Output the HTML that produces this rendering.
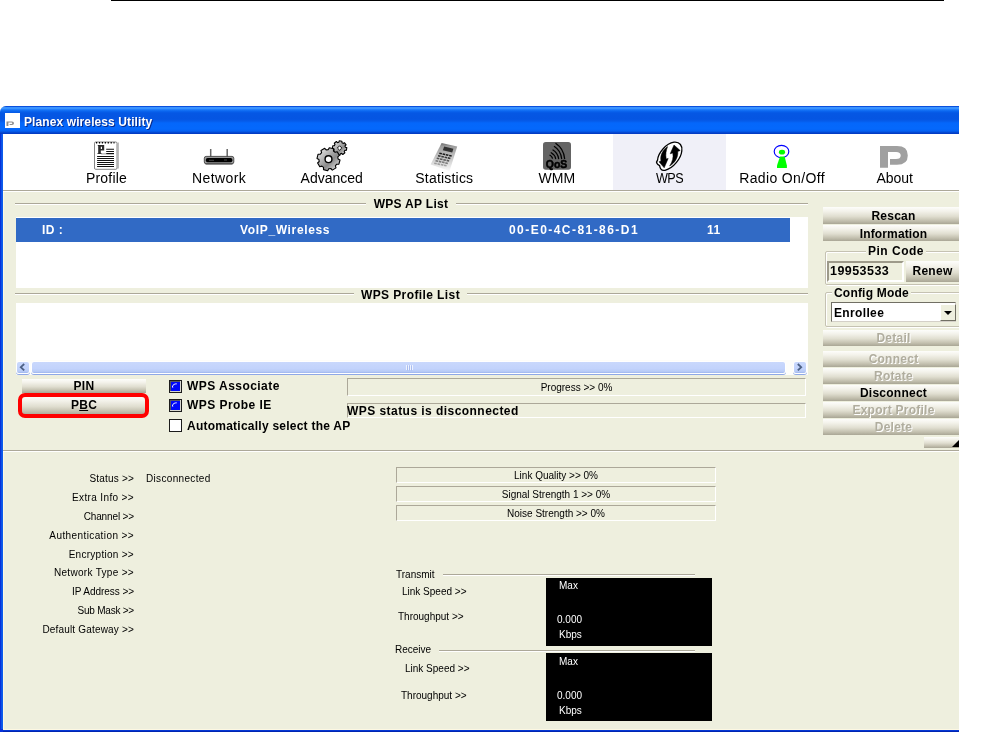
<!DOCTYPE html>
<html><head><meta charset="utf-8">
<style>
*{box-sizing:border-box;margin:0;padding:0}
html,body{width:998px;height:732px;overflow:hidden;background:#fff}
body{font-family:"Liberation Sans",sans-serif;position:relative;color:#000}
.abs{position:absolute}
#topline{left:111px;top:0;width:833px;height:1px;background:#000}
#win{will-change:transform;left:0;top:106px;width:959px;height:626px;background:#eeefde;overflow:hidden;border-top-left-radius:6px}
#title{left:0;top:0;width:959px;height:28px;background:linear-gradient(to bottom,#0a50dd 0px,#0a50dd 1px,#3a93ff 1.5px,#3a93ff 3px,#1f7dfb 3.5px,#0b67f0 5px,#0557e4 7px,#0555e2 13px,#055bea 15px,#0467fb 17px,#0468fc 23px,#0561f2 25px,#0450dc 26px,#0340c8 27px,#0338c0 28px)}
#title .ico{left:5px;top:7px;width:15px;height:15px;background:#fff}
#title .txt{left:24px;top:9px;letter-spacing:.1px;font-size:12px;font-weight:bold;color:#fff;white-space:nowrap;text-shadow:1px 1px 0 #0a2a8a}
#lb{left:0;top:28px;width:4px;height:598px;background:linear-gradient(to right,#0831d9 0,#0831d9 1px,#0b52e6 1px,#0b52e6 2px,#0d5cec 2px,#0d5cec 3px,#fdf8e2 3px)}
#bb{left:0;top:623px;width:959px;height:3px;background:linear-gradient(to bottom,#fdf8e2 0,#fdf8e2 1px,#0a3fe0 1px,#0030c8 2px,#001a9c 3px);border-left:3px solid #0831d9}
#tool{left:3px;top:28px;width:956px;height:57px;background:#fff;border-bottom:1px solid #aca899;box-shadow:0 1px 0 #fff}
.tab{top:0;width:113px;height:56px;text-align:center;font-size:14px}
.tab span{position:absolute;left:0;width:100%;top:36px;line-height:16px}
.tab.sel{background:#f0f0f8}

.gl{height:2px;border-top:1px solid #aca899;border-bottom:1px solid #fff}
.gt{font-size:12px;font-weight:bold;white-space:nowrap;background:#eeefde;text-align:center;line-height:14px;letter-spacing:.3px}
.lst{background:#fff}
.row{background:#316ac5;color:#fff;font-size:12px;font-weight:bold;line-height:25px;white-space:nowrap;letter-spacing:.5px}
.row span{position:absolute;top:0}
.btn{background:linear-gradient(#fdfdfb 0%,#f3f2ea 25%,#e0ded0 55%,#c4c1b0 80%,#a9a695 100%);font-size:12px;font-weight:bold;text-align:center;white-space:nowrap;letter-spacing:.25px;overflow:hidden}
.btn.dis{color:#b0ad9e;text-shadow:1px 1px 0 #fff}
.cb{width:13px;height:13px;border:1px solid #1c1c1c;background:#fff}
.cb.on{background:#0008f8;box-shadow:inset -1px -1px 0 #d8d8d0,inset 1px 1px 0 #556}
.cb.on:after{content:"";position:absolute;left:2px;top:2px;width:4px;height:4px;border-top:1.5px solid #fff;border-left:1.5px solid #fff;border-top-left-radius:5px;transform:rotate(8deg)}
.cl{font-size:12px;font-weight:bold;white-space:nowrap;letter-spacing:.45px;line-height:14px}
.sunk{border:1px solid;border-color:#aca899 #fff #fff #aca899}
.sm{font-size:10px;white-space:nowrap;line-height:12px}

.grp{border:1px solid #c5c2b2;border-radius:2px;box-shadow:inset 1px 1px 0 #fff,1px 1px 0 #fff}
.lg{font-size:12px;font-weight:bold;white-space:nowrap;background:#eeefde;line-height:14px;letter-spacing:.5px}
.lb9{font-size:10px;white-space:nowrap;line-height:12px;text-align:right;width:131px;left:3px}
.blk{background:#000;color:#fff}
.blk div{position:absolute;font-size:10px;line-height:12px;white-space:nowrap}

.sbb{background:linear-gradient(#c9d8fc 0%,#c2d3fc 60%,#b9cbf6 85%,#9db5ee 100%);border:1px solid #fff;border-radius:3px;box-shadow:0 1px 0 #8fa8e6}
</style></head><body>
<div id="topline" class="abs"></div>
<div id="win" class="abs">
 <div id="title" class="abs"><div class="ico abs"></div><div class="txt abs">Planex wireless Utility</div></div>
 <div id="lb" class="abs"></div>
 <div id="tool" class="abs">
  <div class="tab abs" style="left:47px"><span style="letter-spacing:.2px">Profile</span></div>
  <div class="tab abs" style="left:159.6px"><span style="letter-spacing:.4px">Network</span></div>
  <div class="tab abs" style="left:272.2px"><span>Advanced</span></div>
  <div class="tab abs" style="left:384.8px"><span style="letter-spacing:.2px">Statistics</span></div>
  <div class="tab abs" style="left:497.4px"><span>WMM</span></div>
  <div class="tab abs sel" style="left:610px"><span style="letter-spacing:-.6px;transform:scaleX(.9)">WPS</span></div>
  <div class="tab abs" style="left:722.6px"><span style="letter-spacing:.35px">Radio On/Off</span></div>
  <div class="tab abs" style="left:835.2px"><span>About</span></div>
 </div>

 <!-- upper panel -->
 <div class="gl abs" style="left:15px;top:97px;width:793px"></div>
 <div class="gt abs" style="left:366px;top:91px;width:90px">WPS AP List</div>
 <div class="lst abs" style="left:16px;top:111px;width:792px;height:71px">
   <div class="row abs" style="left:0;top:1px;width:774px;height:24px">
     <span style="left:26px">ID :</span><span style="left:224px;letter-spacing:.65px">VoIP_Wireless</span><span style="left:493px;letter-spacing:1.45px">00-E0-4C-81-86-D1</span><span style="left:691px">11</span>
   </div>
 </div>
 <div class="gl abs" style="left:15px;top:187px;width:793px"></div>
 <div class="gt abs" style="left:354px;top:182px;width:113px;letter-spacing:.4px">WPS Profile List</div>
 <div class="lst abs" style="left:16px;top:197px;width:792px;height:72px"></div>
 <div id="hs" class="abs" style="left:16px;top:254px;width:792px;height:15px;background:#fdfdfa">
  <div class="abs sbb" style="left:0;top:1px;width:14px;height:13px"></div>
  <div class="abs sbb" style="left:15px;top:1px;width:755px;height:13px"></div>
  <div class="abs sbb" style="left:777px;top:1px;width:14px;height:13px"></div>
  <svg class="abs" style="left:0;top:0" width="792" height="15"><g fill="none" stroke="#4d6185" stroke-width="1.8"><path d="M8.2,4 L4.8,7.2 L8.2,10.4"/><path d="M781.8,4 L785.2,7.2 L781.8,10.4"/></g><path d="M390.5,5 V10 M392.5,5 V10 M394.5,5 V10 M396.5,5 V10" stroke="#eef3ff" stroke-width="1"/><path d="M391.5,5.5 V10.5 M393.5,5.5 V10.5 M395.5,5.5 V10.5" stroke="#9db2ea" stroke-width="1" opacity=".7"/></svg>
 </div>
 <div class="btn abs" style="left:22px;top:273px;width:124px;height:14px;line-height:15px">PIN</div>
 <div class="btn abs" style="left:21px;top:290px;width:126px;height:19px;line-height:19px">P<u>B</u>C</div>
 <div class="abs" style="left:18px;top:287px;width:131px;height:25px;border:4px solid #f00;border-radius:7px"></div>
 <div class="cb on abs" style="left:169px;top:274px"></div><div class="cl abs" style="left:187px;top:273px">WPS Associate</div>
 <div class="cb on abs" style="left:169px;top:293px"></div><div class="cl abs" style="left:187px;top:292px">WPS Probe IE</div>
 <div class="cb abs" style="left:169px;top:313px"></div><div class="cl abs" style="left:187px;top:313px;letter-spacing:.24px">Automatically select the AP</div>
 <div class="sunk abs" style="left:347px;top:272px;width:459px;height:18px"></div>
 <div class="sm abs" style="left:347px;top:276px;width:459px;text-align:center">Progress &gt;&gt; 0%</div>
 <div class="sunk abs" style="left:347px;top:297px;width:459px;height:15px"></div>
 <div class="cl abs" style="left:347px;top:298px">WPS status is disconnected</div>
 <div class="gl abs" style="left:3px;top:344px;width:956px"></div>

 <!-- right panel -->
 <div class="btn abs" style="left:823px;top:101px;width:141px;height:17px;line-height:18px">Rescan</div>
 <div class="btn abs" style="left:823px;top:119px;width:141px;height:16px;line-height:18px;letter-spacing:.15px">Information</div>
 <div class="grp abs" style="left:825px;top:145px;width:140px;height:34px"></div>
 <div class="lg abs" style="left:866px;top:138px;padding:0 2px">Pin Code</div>
 <div class="abs" style="left:827px;top:155px;width:77px;height:21px;border:2px solid;border-color:#9d9a8a #fff #fff #9d9a8a;font-size:12.5px;font-weight:bold;line-height:17px;letter-spacing:.45px;padding-left:1px">19953533</div>
 <div class="btn abs" style="left:906px;top:155px;width:53px;height:21px;line-height:20px">Renew</div>
 <div class="grp abs" style="left:825px;top:186px;width:140px;height:35px"></div>
 <div class="lg abs" style="left:832px;top:180px;padding:0 2px;letter-spacing:.2px">Config Mode</div>
 <div class="abs" style="left:831px;top:196px;width:125px;height:20px;background:#fff;border:1px solid;border-color:#716f64 #d4d0c8 #d4d0c8 #716f64;font-size:12px;font-weight:bold;line-height:20px;letter-spacing:.35px;padding-left:2px">Enrollee</div>
 <div class="abs" style="left:940px;top:198px;width:16px;height:17px;background:#eeefde;border:1px solid;border-color:#fff #716f64 #716f64 #fff"></div>
 <div class="abs" style="left:944px;top:205px;width:0;height:0;border:4px solid transparent;border-top:4px solid #000;border-bottom:0"></div>
 <div class="btn dis abs" style="left:823px;top:224px;width:141px;height:16px;line-height:17px">Detail</div>
 <div class="btn dis abs" style="left:823px;top:245px;width:141px;height:16px;line-height:17px">Connect</div>
 <div class="btn dis abs" style="left:823px;top:262px;width:141px;height:16px;line-height:17px">Rotate</div>
 <div class="btn abs" style="left:823px;top:279px;width:141px;height:16px;line-height:17px">Disconnect</div>
 <div class="btn dis abs" style="left:823px;top:296px;width:141px;height:16px;line-height:17px">Export Profile</div>
 <div class="btn dis abs" style="left:823px;top:313px;width:141px;height:16px;line-height:17px">Delete</div>
 <div class="btn abs" style="left:924px;top:331px;width:35px;height:11px"></div>
 <div class="abs" style="left:952px;top:334px;width:0;height:0;border-left:7px solid transparent;border-bottom:7px solid #000"></div>
 <!-- lower panel -->
 <div class="lb9 abs" style="top:367px;letter-spacing:0.20px">Status &gt;&gt;</div>
 <div class="sm abs" style="left:146px;top:367px;letter-spacing:.33px">Disconnected</div>
 <div class="lb9 abs" style="top:386px;letter-spacing:0.36px">Extra Info &gt;&gt;</div>
 <div class="lb9 abs" style="top:405px;letter-spacing:-0.14px">Channel &gt;&gt;</div>
 <div class="lb9 abs" style="top:424px;letter-spacing:0.40px">Authentication &gt;&gt;</div>
 <div class="lb9 abs" style="top:443px;letter-spacing:0.28px">Encryption &gt;&gt;</div>
 <div class="lb9 abs" style="top:461px;letter-spacing:0.31px">Network Type &gt;&gt;</div>
 <div class="lb9 abs" style="top:480px;letter-spacing:-0.05px">IP Address &gt;&gt;</div>
 <div class="lb9 abs" style="top:499px;letter-spacing:-0.23px">Sub Mask &gt;&gt;</div>
 <div class="lb9 abs" style="top:518px;letter-spacing:0.18px">Default Gateway &gt;&gt;</div>
 <div class="sunk sm abs" style="left:396px;top:361px;width:320px;height:16px;text-align:center;line-height:16px">Link Quality &gt;&gt; 0%</div>
 <div class="sunk sm abs" style="left:396px;top:380px;width:320px;height:16px;text-align:center;line-height:16px">Signal Strength 1 &gt;&gt; 0%</div>
 <div class="sunk sm abs" style="left:396px;top:399px;width:320px;height:16px;text-align:center;line-height:16px">Noise Strength &gt;&gt; 0%</div>
 <div class="gl abs" style="left:443px;top:468px;width:252px"></div>
 <div class="sm abs" style="left:396px;top:463px">Transmit</div>
 <div class="sm abs" style="left:402px;top:480px">Link Speed &gt;&gt;</div>
 <div class="sm abs" style="left:398px;top:505px">Throughput &gt;&gt;</div>
 <div class="blk abs" style="left:546px;top:472px;width:166px;height:68px"><div style="left:13px;top:2px">Max</div><div style="left:11px;top:36px">0.000</div><div style="left:13px;top:51px">Kbps</div></div>
 <div class="gl abs" style="left:439px;top:544px;width:256px"></div>
 <div class="sm abs" style="left:395px;top:538px">Receive</div>
 <div class="sm abs" style="left:405px;top:557px">Link Speed &gt;&gt;</div>
 <div class="sm abs" style="left:401px;top:584px">Throughput &gt;&gt;</div>
 <div class="blk abs" style="left:546px;top:547px;width:166px;height:68px"><div style="left:13px;top:3px">Max</div><div style="left:11px;top:37px">0.000</div><div style="left:13px;top:52px">Kbps</div></div>
 <div id="bb" class="abs"></div>
</div>

<svg class="abs" style="left:0;top:0" width="998" height="732" viewBox="0 0 998 732">
<defs>
<linearGradient id="gg" x1="0" y1="0" x2="1" y2="1"><stop offset="0" stop-color="#f4f4f4"/><stop offset=".35" stop-color="#b8b8b8"/><stop offset=".6" stop-color="#8a8a8a"/><stop offset=".85" stop-color="#cfcfcf"/><stop offset="1" stop-color="#f0f0f0"/></linearGradient>
<linearGradient id="cg" x1="0" y1="0" x2="0" y2="1"><stop offset="0" stop-color="#6e6e6e"/><stop offset=".12" stop-color="#9c9c9c"/><stop offset=".5" stop-color="#c4c4c4"/><stop offset="1" stop-color="#fafafa"/></linearGradient>
</defs>
<!-- title icon -->
<path d="M6.5,121.5 H12 Q14,121.5 14,123.2 Q14,125 12,125 H9.6 V123.9 H11.6 Q12.3,123.9 12.3,123.2 Q12.3,122.6 11.6,122.6 H8.4 V126 H6.5Z" fill="#8c8c8c"/>
<!-- profile -->
<g>
<rect x="94.5" y="142" width="22.5" height="27.3" rx="1.2" fill="#fff" stroke="#666" stroke-width=".8"/>
<path d="M118.2,142.5 V168.5" stroke="#888" stroke-width=".8"/>
<path d="M96,142.7 H114.5" stroke="#000" stroke-width="1.6" stroke-dasharray="1.2 1.72"/>
<path d="M97.8,145 H104.2 V150.6 H100.8 V153.2 H101.6 V154.1 H97.4 V153.2 H98.2 V146 H97.8Z M100.8,146.8 V148.9 H102 V146.8Z" fill="#2a2a2a" fill-rule="evenodd"/>
<path d="M101,153.9 H106" stroke="#555" stroke-width=".6"/>
<g stroke="#111" stroke-width="1.1"><path d="M106.2,149.3 H114 M106.2,151.5 H114 M106.2,153.6 H114"/>
<path d="M97.1,156.5 H114 M97.1,158.5 H114 M97.1,160.5 H114 M97.1,162.5 H114 M97.1,164.5 H114 M97.1,166.5 H114"/></g>
</g>
<!-- network -->
<g>
<path d="M210.7,149 V157 M227.2,149 V157" stroke="#666" stroke-width="1.5"/>
<rect x="204.3" y="156.4" width="29.5" height="7.4" rx="1.8" fill="#9a9a9a" stroke="#444" stroke-width=".9"/>
<rect x="205.8" y="158" width="26.6" height="4.2" rx="1.8" fill="#000"/>
<path d="M209,160.3 H214 M224,160 H227" stroke="#666" stroke-width=".7"/>
<path d="M205.5,164 H232.5" stroke="#333" stroke-width=".8"/>
</g>
<!-- advanced -->
<g stroke="#000" stroke-width="1.1" stroke-linejoin="round">
<path d="M345.3,147.2 L346.8,147.6 L346.4,150.3 L344.9,150.4 L344.2,151.5 L344.9,152.8 L342.8,154.5 L341.7,153.4 L340.4,153.7 L340.0,155.2 L337.3,154.8 L337.2,153.3 L336.1,152.6 L334.8,153.3 L333.1,151.2 L334.2,150.1 L333.9,148.8 L332.4,148.4 L332.8,145.7 L334.3,145.6 L335.0,144.5 L334.3,143.2 L336.4,141.5 L337.5,142.6 L338.8,142.3 L339.2,140.8 L341.9,141.2 L342.0,142.7 L343.1,143.4 L344.4,142.7 L346.1,144.8 L345.0,145.9Z" fill="url(#gg)"/>
<path d="M339.6,145.8 L341.8,148 L339.6,150.2 L337.4,148Z" fill="#fff" stroke-width=".9"/>
<path d="M338.1,159.0 L340.0,160.0 L338.9,164.2 L336.7,164.2 L335.4,165.8 L336.0,167.9 L332.3,170.1 L330.8,168.5 L328.7,168.8 L327.7,170.7 L323.5,169.6 L323.5,167.4 L321.9,166.1 L319.8,166.7 L317.6,163.0 L319.2,161.5 L318.9,159.4 L317.0,158.4 L318.1,154.2 L320.3,154.2 L321.6,152.6 L321.0,150.5 L324.7,148.3 L326.2,149.9 L328.3,149.6 L329.3,147.7 L333.5,148.8 L333.5,151.0 L335.1,152.3 L337.2,151.7 L339.4,155.4 L337.8,156.9Z" fill="url(#gg)"/>
<circle cx="328.5" cy="159.2" r="3.4" fill="#fff" stroke-width="1.4"/>
</g>
<!-- statistics -->
<g>
<path d="M441.6,143 L457.2,146.4 L449.6,171 L430.6,164.4Z" fill="url(#cg)"/>
<path d="M444.2,146.6 L453.4,148.8 L452.2,152.6 L442.8,150.2Z" fill="#1c1c1c" opacity=".85"/>
<g fill="#111" opacity=".95">
<rect x="439.5" y="152.5" width="2.6" height="1.6" opacity="1.00" transform="rotate(12 439.5 152.5)"/>
<rect x="442.8" y="153.2" width="2.6" height="1.6" opacity="1.00" transform="rotate(12 442.8 153.2)"/>
<rect x="446.0" y="154.0" width="2.6" height="1.6" opacity="1.00" transform="rotate(12 446.0 154.0)"/>
<rect x="449.3" y="154.7" width="2.6" height="1.6" opacity="1.00" transform="rotate(12 449.3 154.7)"/>
<rect x="438.2" y="155.0" width="2.6" height="1.6" opacity="0.83" transform="rotate(12 438.2 155.0)"/>
<rect x="441.5" y="155.7" width="2.6" height="1.6" opacity="0.83" transform="rotate(12 441.5 155.7)"/>
<rect x="444.8" y="156.4" width="2.6" height="1.6" opacity="0.83" transform="rotate(12 444.8 156.4)"/>
<rect x="448.0" y="157.1" width="2.6" height="1.6" opacity="0.83" transform="rotate(12 448.0 157.1)"/>
<rect x="436.9" y="157.5" width="2.6" height="1.6" opacity="0.66" transform="rotate(12 436.9 157.5)"/>
<rect x="440.2" y="158.2" width="2.6" height="1.6" opacity="0.66" transform="rotate(12 440.2 158.2)"/>
<rect x="443.5" y="158.9" width="2.6" height="1.6" opacity="0.66" transform="rotate(12 443.5 158.9)"/>
<rect x="446.8" y="159.6" width="2.6" height="1.6" opacity="0.66" transform="rotate(12 446.8 159.6)"/>
<rect x="435.7" y="159.9" width="2.6" height="1.6" opacity="0.49" transform="rotate(12 435.7 159.9)"/>
<rect x="439.0" y="160.6" width="2.6" height="1.6" opacity="0.49" transform="rotate(12 439.0 160.6)"/>
<rect x="442.2" y="161.3" width="2.6" height="1.6" opacity="0.49" transform="rotate(12 442.2 161.3)"/>
<rect x="445.5" y="162.1" width="2.6" height="1.6" opacity="0.49" transform="rotate(12 445.5 162.1)"/>
<rect x="434.4" y="162.4" width="2.6" height="1.6" opacity="0.32" transform="rotate(12 434.4 162.4)"/>
<rect x="437.7" y="163.1" width="2.6" height="1.6" opacity="0.32" transform="rotate(12 437.7 163.1)"/>
<rect x="441.0" y="163.8" width="2.6" height="1.6" opacity="0.32" transform="rotate(12 441.0 163.8)"/>
<rect x="444.2" y="164.5" width="2.6" height="1.6" opacity="0.32" transform="rotate(12 444.2 164.5)"/>
</g>
</g>
<!-- WMM -->
<g>
<rect x="543" y="142" width="28" height="27.8" rx="2.8" fill="#646464"/>
<g fill="none" stroke="#000" stroke-width="1.3" stroke-linecap="round">
<path d="M555.9,143.5 Q563.5,148.5 564.6,158.5"/>
<path d="M554.4,146.5 Q560.6,150.5 561.6,158.5"/>
<path d="M553,150 Q557.8,153 558.6,158.5"/>
<path d="M551.2,152.8 Q555,155 555.6,158.5"/>
<path d="M550,155.2 Q552,156.3 552.4,158.2"/>
</g>
<text x="545.8" y="167.8" font-family="Liberation Sans, sans-serif" font-weight="bold" font-size="10" textLength="21.5" lengthAdjust="spacingAndGlyphs" fill="#000" stroke="#000" stroke-width=".5">QoS</text>
</g>
<!-- WPS -->
<g>
<path d="M674,142.2 C680,141.6 682.6,146 681.8,151 C681,158 674,168 665,170.3 C661,171.2 660,168 659.6,165.6 C657,164.5 655.6,162.5 657.6,160 C658,153 666,143.5 674,142.2Z" fill="#fff" stroke="#000" stroke-width="1.3"/>
<path d="M667.6,146.6 C662.5,150 659.8,156 661,161 L659,161.8 L664.2,167.8 L668.2,158.4 L666.2,159 C665.4,154.5 666,150.5 667.6,146.6Z" fill="#000" stroke="#000" stroke-width=".5" stroke-linejoin="round"/>
<path d="M674,145 L680.2,150.6 L677.8,151.4 C678.4,157 675,163 669.6,166 C672.6,161.6 673.6,157.4 672.8,153 L670.2,153.8Z" fill="#000" stroke="#000" stroke-width=".5" stroke-linejoin="round"/>
</g>
<!-- radio -->
<g>
<ellipse cx="781.5" cy="151.5" rx="7.3" ry="6.2" fill="none" stroke="#0000ff" stroke-width="1.15"/>
<ellipse cx="782" cy="152.2" rx="3.1" ry="2.4" fill="#00ff00"/>
<path d="M780,156.4 H784.6 L786.9,165.5 V167.9 H777 V165.5Z" fill="#00ff00"/>
</g>
<!-- about -->
<path d="M880,146.1 H897 Q907.8,146.1 907.8,155.4 Q907.8,164.7 897,164.7 H890 V159 H896 Q900.7,159 900.7,155.5 Q900.7,152 896,152 H888 V167.7 H880Z" fill="#a0a0a0"/>
</svg>
</body></html>
